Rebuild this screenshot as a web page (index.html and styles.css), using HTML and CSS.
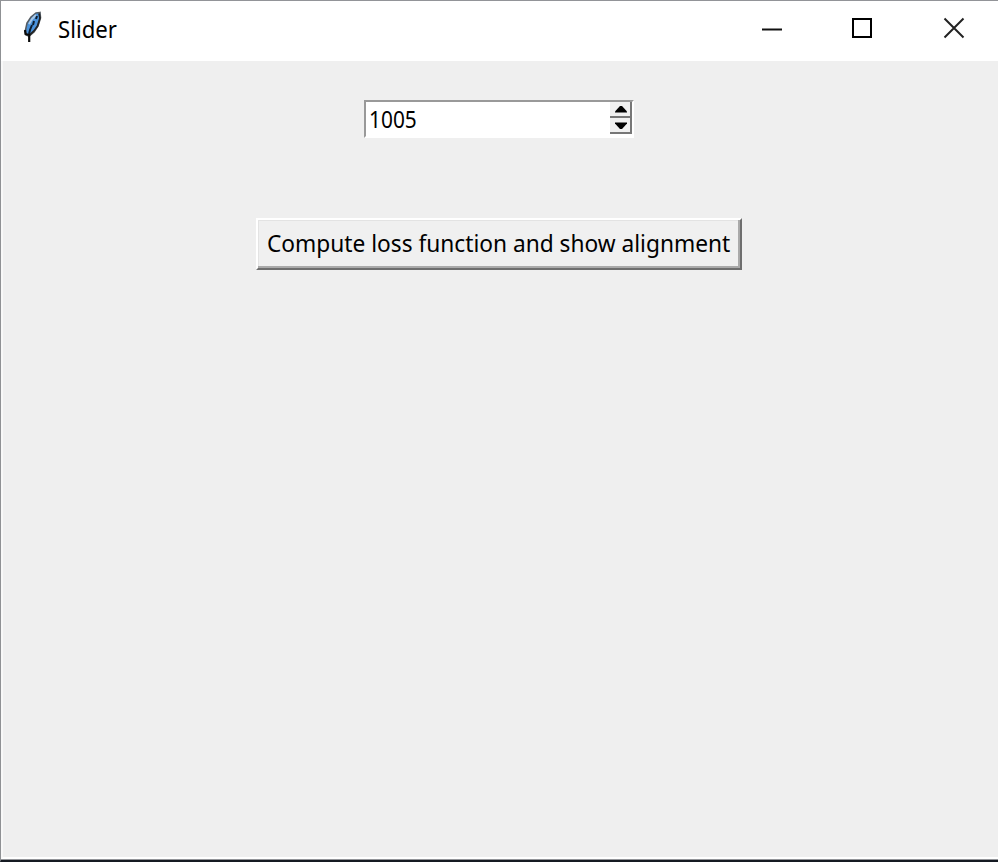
FILE: index.html
```html
<!DOCTYPE html>
<html lang="en">
<head>
<meta charset="utf-8">
<title>Slider</title>
<link rel="stylesheet" href="styles.css">
</head>
<body>
<div class="window">
  <header class="titlebar">
    <svg class="feather" width="21" height="34" viewBox="0 0 21 34">
      <path d="M18 2.500L14 3L9 7L5 13L3.500 20L4 25L7 26L12 22L16 16L18.500 8Z" fill="#4a92db" stroke="#555c63" stroke-width="1.600"/>
      <path d="M14 5L10 9L7 14" fill="none" stroke="#a9c8e6" stroke-width="2"/>
      <path d="M17 3.500L18 8L15.500 16L12 21L7.500 25" fill="none" stroke="#222" stroke-width="1.700"/>
      <path d="M15 6L14 9M12 11L11 15M10 15L8 20L7 24" fill="none" stroke="#0b1d30" stroke-width="2"/>
      <path d="M3 20L3.500 24L7.200 25V32" fill="none" stroke="#0a0a0a" stroke-width="2.200"/>
    </svg>
    <h1 class="title"><span class="title-text">Slider</span></h1>
    <div class="controls">
      <svg width="20" height="20"><path d="M0 11.500H20" stroke="#111" stroke-width="2"/></svg>
      <svg width="20" height="20"><path d="M1 1H19V19H1Z" fill="none" stroke="#000" stroke-width="2"/></svg>
      <svg width="22" height="22"><path d="M1.500 1.500L20.500 20.500M20.500 1.500L1.500 20.500" stroke="#222" stroke-width="2"/></svg>
    </div>
  </header>
  <main class="content">
    <div class="spinbox">
      <div class="value"><span class="value-text">1005</span></div>
      <div class="arrows">
        <div class="arrow"><svg width="12" height="7"><path d="M0 6.500V5.500L5 0H7L12 5.500V6.500Z"/></svg></div>
        <div class="arrow"><svg width="12" height="7"><path d="M0 .5V1.500L5 7H7L12 1.500V.5Z"/></svg></div>
      </div>
    </div>
    <button class="compute"><span class="compute-text">Compute loss function and show alignment</span></button>
  </main>
</div>
</body>
</html>
```
FILE: styles.css
```css
* { box-sizing: border-box; }
body { margin: 0; font-family: "Noto Sans", "Open Sans", sans-serif; font-size: 24px; color: #000; }
svg { display: block; }
.window { width: 998px; height: 862px; display: flex; flex-direction: column; border-top: 1px solid #929498; border-left: 1px solid #8f9194; border-bottom: 2px solid #151a22; background: #929498; }
.titlebar { height: 60px; flex: none; display: flex; background: #fff; padding-left: 21px; }
.feather { margin-top: 9px; }
.title { margin: 10px 0 0 15px; font-size: 24px; font-weight: 400; line-height: 36px; }
.title-text, .value-text, .compute-text { display: inline-block; white-space: nowrap; transform-origin: left center; }
.title-text { transform: scaleX(.925); }
.controls { margin: 17px 33px 0 auto; display: flex; }
.controls svg + svg { margin-left: 70px; }
.controls svg:last-child { margin-top: -1px; margin-left: 71px; }
.content { flex: 1; display: flex; flex-direction: column; align-items: center; margin-bottom: 1px; padding: 39px 4px 0 0; background: #efefef; border-left: 2px solid #f8f8f8; border-bottom: 2px solid #fff; }
.spinbox { width: 270px; height: 38px; display: flex; flex: none; background: #fff; border: 2px solid #999; border-right-color: #fff; border-bottom-color: #fff; }
.value { flex: 1; padding-left: 3px; line-height: 33px; }
.value-text { transform: scaleX(.87); }
.arrows { width: 22px; height: 32px; }
.arrow { height: 16px; padding-left: 2px; display: flex; align-items: center; justify-content: center; background: #f0f0f0; border-right: 2px solid #777; border-bottom: 2px solid #777; }
.compute { display: block; width: 486px; height: 52px; margin: 80px 0 0; padding: 0 0 0 9px; text-align: left; font: inherit; line-height: 44px; color: #000; background: #f0f0f0; border: 2px solid; border-color: #fff #6e6e6e #6e6e6e #fff; box-shadow: inset -2px -2px #aaa, inset 1px 1px #e3e3e3; }
.compute-text { transform: translateY(-1px) scaleX(.946); }
```
